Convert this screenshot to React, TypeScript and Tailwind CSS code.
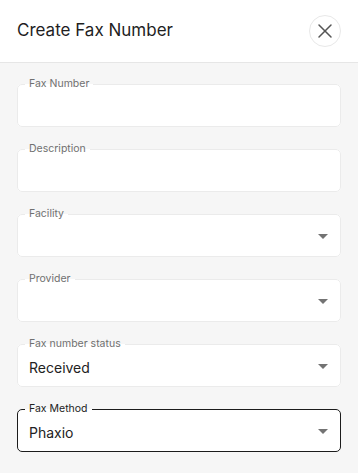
import { X } from "lucide-react"

type Field = {
  label: string
  value?: string
  select?: boolean
  focused?: boolean
}

const fields: Field[] = [
  { label: "Fax Number" },
  { label: "Description" },
  { label: "Facility", select: true },
  { label: "Provider", select: true },
  { label: "Fax number status", value: "Received", select: true },
  { label: "Fax Method", value: "Phaxio", select: true, focused: true },
]

function OutlinedField({ label, value, select, focused }: Field) {
  return (
    <fieldset
      className={`min-w-0 rounded-[5px] border bg-white pl-[11px] pr-[11px] ${
        focused ? "border-[#1c1c1c]" : "border-[#ebebeb]"
      }`}
    >
      <legend
        className={`ml-[-4px] px-[4px] text-[10.5px] leading-[12px] ${
          focused ? "text-[#222]" : "text-[#707070]"
        }`}
      >
        {label}
      </legend>
      <div className="flex h-[36px] items-center justify-between pb-[2px]">
        <span className="text-[14px] text-[#222]">{value}</span>
        {select && (
          <svg width="10" height="5" viewBox="0 0 10 5" className="mb-[1px] mr-[1px]">
            <path d="M0 0h10L5 5z" fill="#737373" />
          </svg>
        )}
      </div>
    </fieldset>
  )
}

export default function App() {
  return (
    <div className="h-[473px] w-[358px] bg-[#f6f6f6] font-['Inter',sans-serif]">
      {/* Header */}
      <div className="flex h-[63px] items-center justify-between border-b border-[#e6e6e6] bg-white pl-[17px] pr-[17px]">
        <h1 className="text-[17px] text-[#1f1f1f]">Create Fax Number</h1>
        <button className="flex h-[32px] w-[32px] items-center justify-center rounded-full border border-[#e8e8e8] text-[#555]">
          <X size={24} strokeWidth={1.5} />
        </button>
      </div>

      {/* Form */}
      <div className="flex flex-col gap-[16px] px-[17px] pt-[15px]">
        {fields.map((f) => (
          <OutlinedField key={f.label} {...f} />
        ))}
      </div>
    </div>
  )
}
